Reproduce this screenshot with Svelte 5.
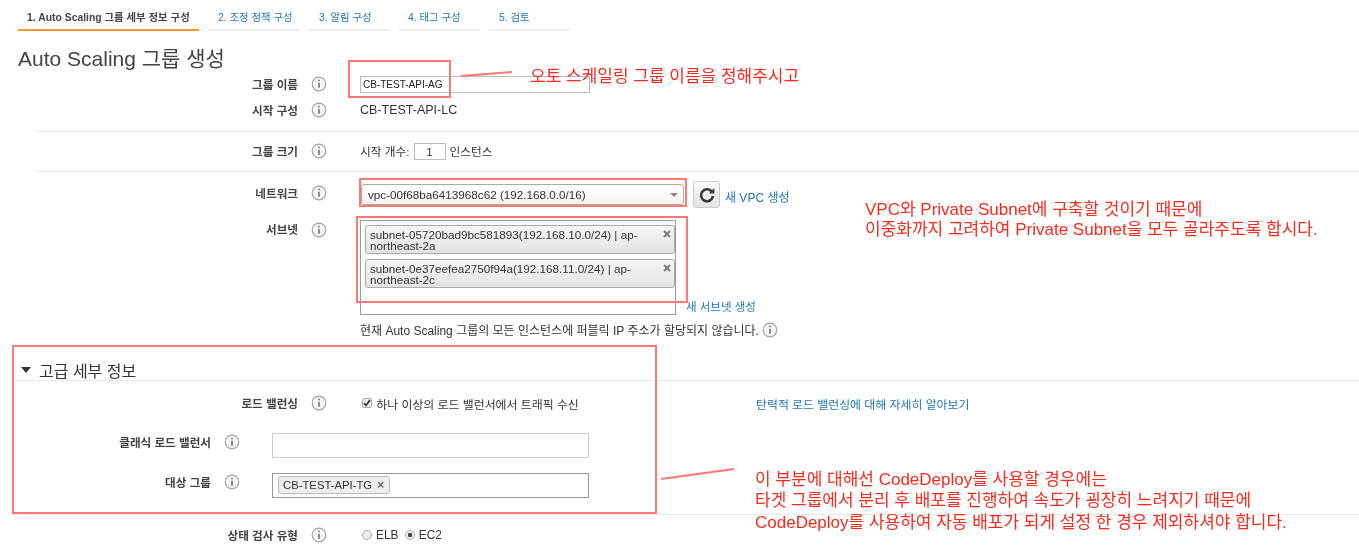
<script>
  const tabs = [
    { label: '1. Auto Scaling 그룹 세부 정보 구성', width: 181, pad: 9, active: true },
    { label: '2. 조정 정책 구성', width: 92, pad: 10 },
    { label: '3. 알림 구성', width: 81, pad: 10 },
    { label: '4. 태그 구성', width: 81, pad: 9 },
    { label: '5. 검토', width: 81, pad: 10 }
  ];
</script>

{#snippet info()}
  <svg class="info" width="16" height="16" viewBox="0 0 16 16" aria-hidden="true">
    <circle cx="8" cy="8" r="6.8" fill="#f6f6f6" stroke="#a3a3a3" stroke-width="1.2" />
    <path d="M8 6.8v5" stroke="#555" stroke-width="1.3" fill="none" />
    <path d="M8 3.7v1.5" stroke="#555" stroke-width="1.4" fill="none" />
  </svg>
{/snippet}

{#snippet cross()}
  <svg class="cross" width="8" height="8" viewBox="0 0 8 8" aria-hidden="true">
    <path d="M1 1l6 6M7 1L1 7" stroke="#7d7d7d" stroke-width="2" fill="none" />
  </svg>
{/snippet}

<div class="page">
  <nav class="tabs">
    {#each tabs as t}
      <div class="tab" class:active={t.active} style="width:{t.width}px;padding-left:{t.pad}px">{t.label}</div>
    {/each}
  </nav>

  <h1>Auto Scaling 그룹 생성</h1>

  <section class="block first">
    <div class="row">
      <div class="lab">그룹 이름</div>
      {@render info()}
      <div class="val"><div class="name-input">CB-TEST-API-AG</div></div>
    </div>
    <div class="row second">
      <div class="lab">시작 구성</div>
      {@render info()}
      <div class="val text13">CB-TEST-API-LC</div>
    </div>
  </section>

  <section class="block size">
    <div class="row">
      <div class="lab">그룹 크기</div>
      {@render info()}
      <div class="val count">시작 개수:<span class="num">1</span>인스턴스</div>
    </div>
  </section>

  <section class="block net">
    <div class="row network">
      <div class="lab">네트워크</div>
      {@render info()}
      <div class="val netval">
        <div class="select">vpc-00f68ba6413968c62 (192.168.0.0/16)<span class="caret"></span></div>
        <div class="refresh">
          <svg width="20" height="20" viewBox="0 0 20 20" aria-hidden="true">
            <path d="M15.2 7.2A6 6 0 1 0 16 11" fill="none" stroke="#3c3c3c" stroke-width="2.6" />
            <path d="M11.8 8.6h5.6V3z" fill="#3c3c3c" />
          </svg>
        </div>
        <a class="link vpc" href="#vpc">새 VPC 생성</a>
      </div>
    </div>
    <div class="row subnet">
      <div class="lab">서브넷</div>
      {@render info()}
      <div class="val subval">
        <div class="subline">
          <div class="subbox">
            <div class="chip"><span>subnet-05720bad9bc581893(192.168.10.0/24) | ap-northeast-2a</span>{@render cross()}</div>
            <div class="chip"><span>subnet-0e37eefea2750f94a(192.168.11.0/24) | ap-northeast-2c</span>{@render cross()}</div>
          </div>
          <a class="link newsub" href="#subnet">새 서브넷 생성</a>
        </div>
        <div class="note">현재 Auto Scaling 그룹의 모든 인스턴스에 퍼블릭 IP 주소가 할당되지 않습니다. {@render info()}</div>
      </div>
    </div>
  </section>

  <header class="adv">
    <span class="tri"></span>
    <h2>고급 세부 정보</h2>
  </header>

  <section class="advbody">
    <div class="row lb">
      <div class="lab">로드 밸런싱</div>
      {@render info()}
      <div class="val lbval">
        <div class="check">
          <span class="box"><svg width="10" height="10" viewBox="0 0 10 10" aria-hidden="true"><path d="M2 5l2 2.4L8 2" fill="none" stroke="#333" stroke-width="1.7" /></svg></span>
          하나 이상의 로드 밸런서에서 트래픽 수신
        </div>
        <a class="link learn" href="#learn">탄력적 로드 밸런싱에 대해 자세히 알아보기</a>
      </div>
    </div>
    <div class="row wide classic">
      <div class="lab">클래식 로드 밸런서</div>
      {@render info()}
      <div class="field light"></div>
    </div>
    <div class="row wide target">
      <div class="lab">대상 그룹</div>
      {@render info()}
      <div class="field dark"><span class="tag">CB-TEST-API-TG<b>×</b></span></div>
    </div>
  </section>

  <section class="health">
    <div class="row">
      <div class="lab">상태 검사 유형</div>
      {@render info()}
      <div class="val radios">
        <span class="radio"></span>ELB
        <span class="radio on"></span>EC2
      </div>
    </div>
  </section>

  <!-- reviewer's red markup drawn over the page -->
  <div class="mark" style="left:348px;top:60px;width:103px;height:38px"></div>
  <div class="mark" style="left:359px;top:178px;width:328px;height:29px"></div>
  <div class="mark" style="left:356px;top:216px;width:332px;height:87px"></div>
  <div class="mark" style="left:12px;top:345px;width:645px;height:169px"></div>

  <svg class="strokes" width="1359" height="549" aria-hidden="true">
    <path d="M461 76 L512 72" />
    <path d="M661 479 L734 469" />
  </svg>

  <p class="note-red n1">오토 스케일링 그룹 이름을 정해주시고</p>
  <p class="note-red n2">VPC와 Private Subnet에 구축할 것이기 때문에<br />이중화까지 고려하여 Private Subnet을 모두 골라주도록 합시다.</p>
  <p class="note-red n3">이 부분에 대해선 CodeDeploy를 사용할 경우에는<br />타겟 그룹에서 분리 후 배포를 진행하여 속도가 굉장히 느려지기 때문에<br />CodeDeploy를 사용하여 자동 배포가 되게 설정 한 경우 제외하셔야 합니다.</p>
</div>

<style>
  :global(body) {
    margin: 0;
    background: #fff;
  }
  .page {
    position: relative;
    width: 1359px;
    height: 549px;
    overflow: hidden;
    color: #333;
    font-family: "Liberation Sans", "Noto Sans CJK KR", sans-serif;
    font-size: 12px;
    filter: blur(0.35px);
  }
  .tabs {
    display: flex;
    gap: 9px;
    padding-left: 18px;
    height: 31px;
    box-sizing: border-box;
  }
  .tab {
    box-sizing: border-box;
    height: 31px;
    padding-top: 11px;
    border-bottom: 2px solid #eee;
    font-size: 10.4px;
    line-height: 14px;
    color: #1f76b5;
    white-space: nowrap;
  }
  .tab.active {
    border-bottom-color: #f79a2e;
    color: #444;
    font-weight: 700;
  }
  h1 {
    margin: 13px 0 0 18px;
    height: 28px;
    font-size: 21px;
    line-height: 30px;
    font-weight: 400;
    color: #444;
  }
  .block {
    margin-left: 36px;
    border-bottom: 1px solid #e8e8e8;
  }
  .row {
    display: grid;
    grid-template-columns: 298px 62px 1fr;
    align-items: center;
    height: 24px;
  }
  .block .row {
    margin-left: -36px;
  }
  .first {
    height: 59px;
  }
  .second {
    margin-top: 2px;
  }
  .size {
    height: 32px;
    padding-top: 7px;
  }
  .lab {
    text-align: right;
    font-weight: 700;
    font-size: 11.6px;
    color: #444;
    white-space: nowrap;
  }
  .info {
    display: block;
    margin-left: 13px;
  }
  .val {
    min-width: 0;
  }
  .name-input {
    box-sizing: border-box;
    width: 230px;
    height: 17px;
    border: 1px solid #bbb;
    padding-left: 2px;
    font-size: 10px;
    line-height: 15px;
    color: #222;
  }
  .text13 {
    font-size: 12.5px;
  }
  .count {
    display: flex;
    align-items: center;
    font-size: 11.7px;
    line-height: 15px;
  }
  .num {
    box-sizing: border-box;
    width: 32px;
    height: 17px;
    margin: 0 4px;
    border: 1px solid #bbb;
    text-align: center;
    line-height: 15px;
  }
  .net {
    border-bottom: 0;
    padding-top: 9px;
  }
  .network {
    height: 26px;
  }
  .network .lab,
  .network > .info {
    margin-bottom: 4px;
  }
  .netval {
    display: flex;
    align-items: center;
  }
  .select {
    position: relative;
    box-sizing: border-box;
    width: 323px;
    height: 21px;
    margin-left: 1px;
    border: 1px solid #aaa;
    border-radius: 3px;
    padding-left: 6px;
    background: linear-gradient(#fff, #f3f3f3);
    font-size: 11.7px;
    line-height: 19px;
    color: #333;
  }
  .caret {
    position: absolute;
    right: 5px;
    top: 8px;
    border: 4px solid transparent;
    border-top-color: #888;
    border-bottom: 0;
  }
  .refresh {
    box-sizing: border-box;
    display: flex;
    align-items: center;
    justify-content: center;
    width: 27px;
    height: 27px;
    margin-left: 9px;
    border: 1px solid #ccc;
    border-radius: 3px;
    background: linear-gradient(#fafafa, #e3e3e3);
  }
  .link {
    color: #1f76b5;
    text-decoration: none;
    font-size: 12px;
    white-space: nowrap;
  }
  .vpc {
    margin-left: 5px;
    position: relative;
    top: 2px;
  }
  .subnet {
    align-items: start;
    height: auto;
    margin-top: 13px;
  }
  .subnet .lab {
    margin-top: 1px;
  }
  .subnet > .info {
    margin-top: 2px;
  }
  .subline {
    display: flex;
    align-items: flex-end;
  }
  .subbox {
    box-sizing: border-box;
    width: 316px;
    height: 95px;
    border: 1px solid #999;
    padding: 4px 0 0 4px;
  }
  .chip {
    box-sizing: border-box;
    position: relative;
    width: 310px;
    height: 29px;
    margin-bottom: 5px;
    padding: 3px 22px 0 4px;
    border: 1px solid #aaa;
    border-radius: 3px;
    background: linear-gradient(#f6f6f6, #e3e3e3);
    font-size: 11.7px;
    line-height: 11px;
    color: #333;
  }
  .chip span {
    display: block;
  }
  .cross {
    position: absolute;
    right: 3px;
    top: 4px;
  }
  .newsub {
    margin: 0 0 1px 10px;
    font-size: 11.5px;
  }
  .note {
    display: flex;
    align-items: center;
    margin-top: 5px;
    font-size: 12px;
    white-space: pre;
  }
  .note .info {
    margin: 2px 0 0 0;
  }
  .adv {
    display: flex;
    align-items: center;
    margin: 17px 0 0 18px;
    height: 26px;
    border-bottom: 1px solid #e8e8e8;
    box-sizing: border-box;
    padding: 4px 0 0 3px;
  }
  .tri {
    border: 5px solid transparent;
    border-top: 6px solid #333;
    border-bottom: 0;
  }
  h2 {
    margin: 0 0 0 8px;
    font-size: 16px;
    font-weight: 400;
    color: #333;
  }
  .advbody {
    margin-left: 12px;
    height: 134px;
    border-bottom: 1px solid #e8e8e8;
    padding-top: 10px;
    box-sizing: border-box;
  }
  .lb {
    margin-left: -12px;
  }
  .lbval {
    display: flex;
    align-items: center;
  }
  .check {
    display: flex;
    align-items: center;
    width: 396px;
    font-size: 11.9px;
    white-space: pre;
  }
  .box {
    box-sizing: border-box;
    display: flex;
    align-items: center;
    justify-content: center;
    width: 10px;
    height: 10px;
    margin: 0 1px 0 2px;
    border: 1px solid #aaa;
    border-radius: 2px;
    background: #eee;
  }
  .box svg {
    flex: none;
  }
  .learn {
    font-size: 11.9px;
  }
  .wide {
    margin-left: -12px;
    grid-template-columns: 211px 61px 317px;
  }
  .classic,
  .target {
    height: 26px;
  }
  .classic {
    margin-top: 17px;
  }
  .target {
    margin-top: 14px;
  }
  .wide .lab,
  .wide > .info {
    margin-bottom: 6px;
  }
  .field {
    box-sizing: border-box;
    height: 25px;
  }
  .light {
    border: 1px solid #ccc;
  }
  .dark {
    display: flex;
    align-items: center;
    padding-left: 5px;
    border: 1px solid #999;
  }
  .tag {
    box-sizing: border-box;
    display: flex;
    align-items: center;
    height: 18px;
    padding: 0 5px 0 4px;
    border: 1px solid #bbb;
    border-radius: 3px;
    background: #eee;
    font-size: 11.3px;
    color: #333;
  }
  .tag b {
    margin-left: 5px;
    font-size: 12px;
    color: #666;
  }
  .health .row {
    height: 24px;
    margin-top: 8px;
  }
  .radios {
    display: flex;
    align-items: center;
    font-size: 11.9px;
    white-space: pre;
  }
  .radio {
    box-sizing: border-box;
    width: 10px;
    height: 10px;
    margin: 0 4px 0 2px;
    border: 1px solid #aaa;
    border-radius: 50%;
    background: #eee;
  }
  .radio.on {
    margin-left: 3px;
    background: radial-gradient(circle, #444 0 2px, #eee 2.5px);
  }
  .mark {
    position: absolute;
    box-sizing: border-box;
    border: 2px solid #fd7a74;
  }
  .strokes {
    position: absolute;
    left: 0;
    top: 0;
    fill: none;
    stroke: #fd7a74;
    stroke-width: 2;
  }
  .note-red {
    position: absolute;
    margin: 0;
    color: #fb2a1c;
    font-size: 17px;
    white-space: nowrap;
  }
  .n1 {
    left: 530px;
    top: 66px;
    line-height: 22px;
  }
  .n2 {
    left: 865px;
    top: 200px;
    line-height: 20px;
  }
  .n3 {
    left: 755px;
    top: 469px;
    line-height: 21.3px;
  }
</style>
